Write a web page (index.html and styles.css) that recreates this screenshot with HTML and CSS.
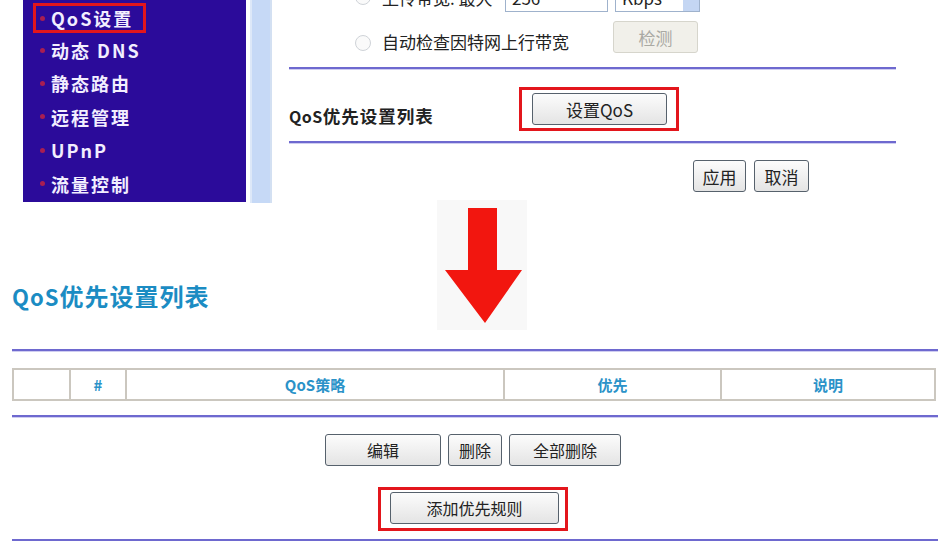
FILE: index.html
```html
<!DOCTYPE html>
<html lang="zh">
<head>
<meta charset="utf-8">
<title>QoS设置</title>
<link rel="stylesheet" href="styles.css">
</head>
<body>
<div class="top">
  <div class="sidebar">
    <div class="menu-item active"><span class="hl"><i class="dot"></i>QoS设置</span></div>
    <div class="menu-item"><i class="dot"></i>动态&nbsp;DNS</div>
    <div class="menu-item"><i class="dot"></i>静态路由</div>
    <div class="menu-item"><i class="dot"></i>远程管理</div>
    <div class="menu-item"><i class="dot"></i>UPnP</div>
    <div class="menu-item"><i class="dot"></i>流量控制</div>
  </div>
  <div class="strip"></div>
  <div class="panel">
    <div class="row1">
      <span class="radio"></span>
      <span class="lbl1">上传带宽: 最大</span>
      <span class="input">256</span>
      <span class="select">Kbps<span class="sel-arrow"><svg width="10" height="8" viewBox="0 0 10 8"><path d="M1 2 L5 6 L9 2" fill="none" stroke="#3a5a90" stroke-width="1.5"/></svg></span></span>
    </div>
    <div class="row2">
      <span class="radio r2"></span>
      <span class="lbl2">自动检查因特网上行带宽</span>
      <button class="btn disabled">检测</button>
    </div>
    <div class="line short l1"></div>
    <div class="row3">
      <span class="title">QoS<span class="cjk">优先设置列表</span></span>
      <div class="redbox rb1"><button class="btn b-setqos">设置QoS</button></div>
    </div>
    <div class="line short l2"></div>
    <div class="row4">
      <button class="btn b-apply">应用</button>
      <button class="btn b-cancel">取消</button>
    </div>
  </div>
</div>

<div class="mid">
  <h2 class="heading">QoS<span class="cjk">优先设置列表</span></h2>
  <div class="arrow">
    <svg width="90" height="130" viewBox="0 0 90 130">
      <path d="M31 8 H60 V70 H85 L48 123 L8 70 H31 Z" fill="#f2160f"/>
    </svg>
  </div>
</div>

<div class="line long"></div>
<table class="qos-table">
  <tr>
    <th class="c1"></th>
    <th class="c2">#</th>
    <th class="c3">QoS策略</th>
    <th class="c4">优先</th>
    <th class="c5">说明</th>
  </tr>
</table>
<div class="line long l3"></div>

<div class="actions">
  <button class="btn b-edit">编辑</button>
  <button class="btn b-del">删除</button>
  <button class="btn b-delall">全部删除</button>
</div>
<div class="addrow">
  <div class="redbox rb2"><button class="btn b-add">添加优先规则</button></div>
</div>
<div class="line long l4"></div>
</body>
</html>
```

FILE: styles.css
```css
* { box-sizing: border-box; }
body {
  margin: 0;
  background: #fff;
  font-family: "Noto Sans CJK SC", "Liberation Sans", sans-serif;
  color: #222;
  overflow: hidden;
}

.top {
  display: flex;
  align-items: flex-start;
  height: 203px;
}

.sidebar {
  margin-left: 23px;
  width: 223px;
  height: 202px;
  background: #2b0b9a;
  color: #f2eeff;
  font-weight: bold;
  font-size: 18px;
  letter-spacing: 2px;
}
.menu-item {
  height: 33.4px;
  display: flex;
  align-items: center;
  padding-left: 17px;
}
.menu-item.active { padding-left: 10px; align-items: flex-end; }
.hl {
  display: flex;
  align-items: center;
  width: 113px;
  height: 30px;
  border: 3px solid #e3161c;
  padding-left: 4px;
}
.dot {
  display: inline-block;
  width: 5px;
  height: 5px;
  border-radius: 50%;
  background: #a81e52;
  margin-right: 6px;
  flex: none;
}

.strip {
  margin-left: 4px;
  width: 22px;
  height: 203px;
  background: #c6d9f6;
  border-left: 2px solid #dde8f8;
  border-right: 2px solid #d3e0f2;
}

.panel {
  margin-left: 17px;
  width: 607px;
  margin-top: -18px;
  font-size: 17px;
}
.row1 {
  height: 30px;
  display: flex;
  align-items: center;
  padding-left: 66px;
}
.radio {
  width: 16px;
  height: 16px;
  border-radius: 50%;
  border: 1px solid #cfd3d8;
  background: #fafafa;
  margin-right: 11px;
  flex: none;
}
.lbl1 { width: 123px; color: #222; }
.input {
  width: 103px;
  height: 30px;
  border: 1px solid #9fb2cc;
  padding: 2px 6px;
  font-size: 17px;
}
.select {
  margin-left: 7px;
  width: 85px;
  height: 30px;
  border: 1px solid #9fb2cc;
  display: flex;
  align-items: center;
  padding-left: 6px;
  justify-content: space-between;
}
.sel-arrow {
  width: 16px;
  height: 28px;
  background: #c4d6f3;
  display: flex;
  align-items: center;
  justify-content: center;
}
.row2 {
  margin-top: 9px;
  height: 32px;
  display: flex;
  align-items: flex-end;
  padding-left: 66px;
}
.r2 { margin-bottom: 2px; }
.lbl2 {
  width: 231px;
  line-height: 20px;
  margin-bottom: 1px;
  font-size: 17px;
  color: #222;
  white-space: nowrap;
}
.btn {
  font-family: "Noto Sans CJK SC", "Liberation Sans", sans-serif;
  font-size: 16px;
  color: #222;
  height: 32px;
  padding: 0;
  background: linear-gradient(#fcfcfc, #e4e4e4);
  border: 1.5px solid #56616c;
  border-radius: 3px;
  flex: none;
}
.btn.disabled {
  width: 85px;
  align-self: stretch;
  background: #f1f0ea;
  border: 1px solid #d6d5cc;
  color: #a9a9a3;
  font-size: 17px;
}

.line {
  height: 2px;
  background: #6e69cf;
  box-shadow: 0 1px 0 #cfcdf1;
}
.l1 { margin-top: 14px; }
.row3 {
  margin-top: 18px;
  height: 44px;
  display: flex;
}
.title {
  width: 230px;
  align-self: flex-end;
  margin-bottom: 5px;
  line-height: 20px;
  font-weight: bold;
  font-size: 16px;
  letter-spacing: 0.5px;
  color: #222;
  white-space: nowrap;
}
.title .cjk { font-size: 17.5px; letter-spacing: 1px; }
.redbox {
  border: 3px solid #e3161c;
}
.rb1 {
  width: 160px;
  height: 44px;
  padding: 3px 0 0 10px;
}
.b-setqos { width: 135px; font-size: 17px; }
.l2 { margin-top: 10px; }
.row4 {
  margin-top: 17px;
  padding-left: 404px;
  display: flex;
  gap: 8px;
}
.b-apply { width: 53px; font-size: 17px; }
.b-cancel { width: 55px; font-size: 17px; }

.mid {
  height: 146px;
  display: grid;
  grid-template-columns: 425px 90px;
  padding-left: 12px;
}
.heading {
  margin: 79px 0 0;
  font-size: 22px;
  line-height: 28px;
  font-weight: bold;
  letter-spacing: 1px;
  color: #1b8cc3;
  white-space: nowrap;
}
.heading .cjk { font-size: 24px; letter-spacing: 1px; }
.arrow {
  margin-top: -3px;
  width: 90px;
  height: 130px;
  background: #f8f8f8;
}
.arrow svg { display: block; }

.long {
  margin-left: 12px;
  width: 926px;
}
.qos-table {
  margin: 17px 0 0 12px;
  width: 924px;
  height: 33px;
  border-collapse: collapse;
  border: 2px solid #cbc7bf;
  table-layout: fixed;
}
.qos-table th {
  border: 2px solid #cbc7bf;
  padding: 0;
  font-size: 15px;
  font-weight: bold;
  color: #2a92c8;
}
.c1 { width: 57px; }
.c2 { width: 56px; }
.c3 { width: 378px; }
.c4 { width: 217px; }
.l3 { margin-top: 14px; }

.actions {
  margin-top: 17px;
  padding-left: 325px;
  display: flex;
  gap: 7px;
}
.b-edit { width: 116px; }
.b-del { width: 54px; }
.b-delall { width: 112px; }
.addrow {
  margin-top: 21px;
  padding-left: 378px;
}
.rb2 {
  width: 190px;
  height: 44px;
  padding: 2px 0 0 9px;
}
.b-add { width: 169px; }
.l4 { margin-top: 8px; }
```
